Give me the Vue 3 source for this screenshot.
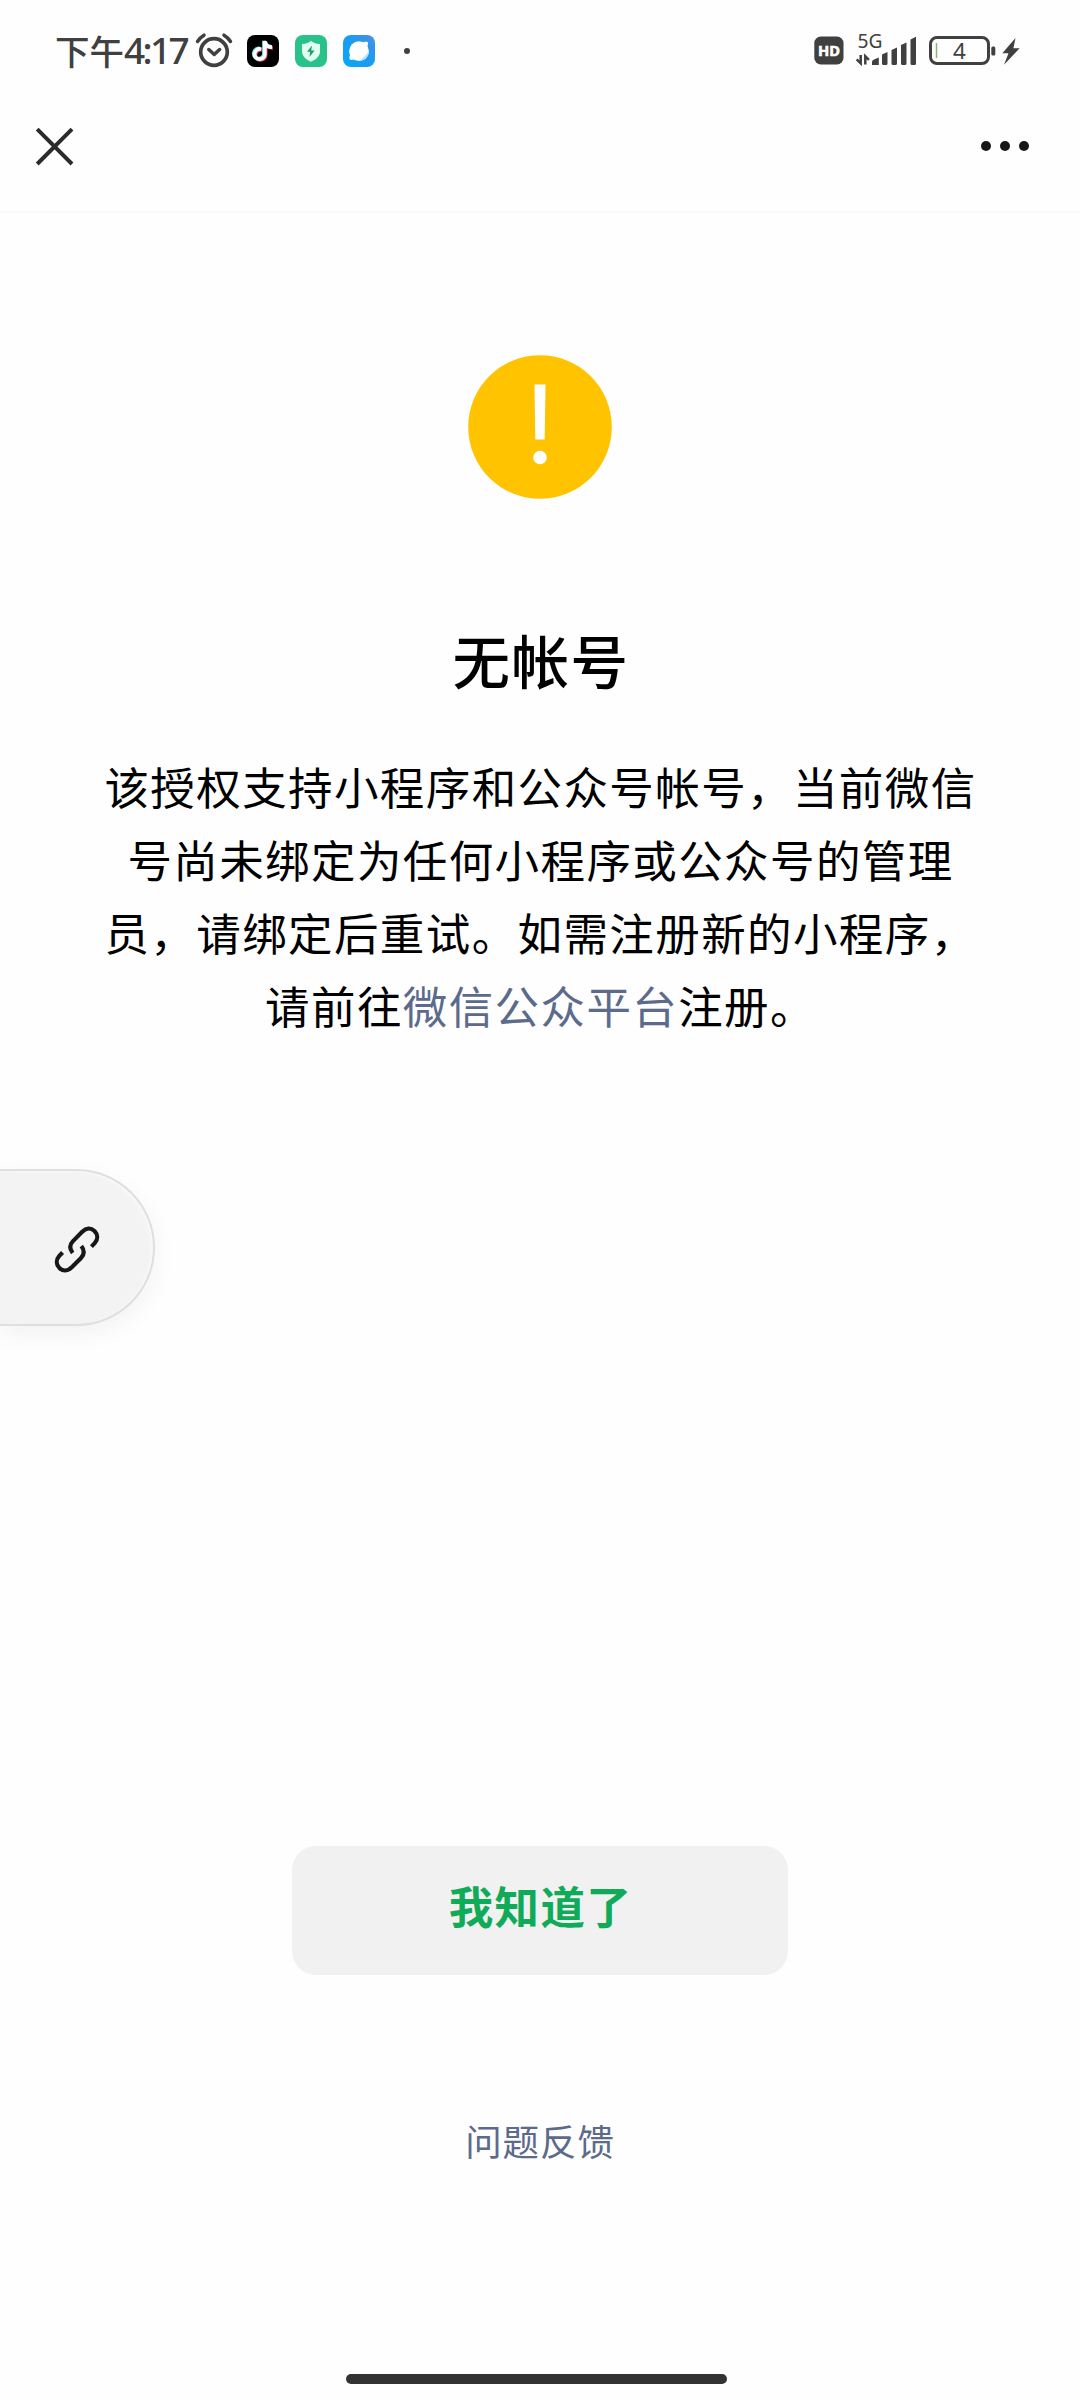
<script setup>
const lines = ['该授权支持小程序和公众号帐号，当前微信', '号尚未绑定为任何小程序或公众号的管理', '员，请绑定后重试。如需注册新的小程序，']
</script>

<template>
  <div class="screen">
    <header class="status">
      <div class="left">
        <span class="time"><span class="cjk">下午</span><span class="num">4:17</span></span>
        <svg class="alarm" width="40" height="40" viewBox="194 31 40 40" fill="none" stroke="#404040">
          <circle cx="214" cy="52" r="13.3" stroke-width="3.7" />
          <path d="M208.800 49.500l5.400 5 5.400-5" stroke-width="3.500" stroke-linecap="round" stroke-linejoin="round" />
          <path d="M197.500 41.500q2.500-4 6.500-6.300M230.500 41.500q-2.500-4-6.500-6.300" stroke-width="3.500" stroke-linecap="round" />
        </svg>
        <svg class="app" width="32" height="32" viewBox="0 0 32 32">
          <rect width="32" height="32" rx="8" fill="#000" />
          <g fill="none" stroke-width="3.700">
            <path d="M14.200 14.200a5.100 5.100 0 1 0 3.600 5V6.200c.4 3.600 3 5.800 7.200 6" stroke="#e8486b" transform="translate(.9 .8)" />
            <path d="M14.200 14.200a5.100 5.100 0 1 0 3.600 5V6.200c.4 3.600 3 5.800 7.200 6" stroke="#59dcd6" transform="translate(-.9 -.5)" />
            <path d="M14.200 14.200a5.100 5.100 0 1 0 3.600 5V6.200c.4 3.600 3 5.800 7.200 6" stroke="#fff" />
          </g>
        </svg>
        <svg class="app" width="32" height="32" viewBox="0 0 32 32">
          <rect width="32" height="32" rx="8" fill="#29c28a" />
          <path d="M16 6c2.700 2 5.400 2.800 9 3v7.200c0 4.700-3.600 8.100-9 10.600-5.400-2.500-9-5.900-9-10.600V9c3.600-.2 6.300-1 9-3z" fill="#e2fff4" />
          <path d="M17 10.500l-5 6.300h3.200l-.8 5.200 5.200-6.600h-3.400z" fill="#159d69" />
        </svg>
        <svg class="app" width="32" height="32" viewBox="0 0 32 32">
          <defs>
            <linearGradient id="sky" x1="0" y1="1" x2="1" y2="0">
              <stop offset="0" stop-color="#05a9fa" />
              <stop offset=".55" stop-color="#1c9bf0" />
              <stop offset="1" stop-color="#4a8fe2" />
            </linearGradient>
          </defs>
          <rect width="32" height="32" rx="8" fill="url(#sky)" />
          <circle cx="16" cy="16.200" r="9.900" fill="#fff" />
          <path d="M20 7.200c2.600-.7 4.500-.6 5 .4.400 1-.1 2.600-1 4.500zM7.300 19.500c-1 2-1.200 3.900-.6 4.800.7.900 2.300.8 4.600 0z" fill="#fff" />
          <path d="M25.900 15.500c.4 6-4.300 10.600-10.400 10.600 4.800-2.700 8-6 10.400-10.600z" fill="#b9dcf7" />
        </svg>
        <i class="more-dot"></i>
      </div>
      <div class="right">
        <svg width="32" height="40" viewBox="813 31 32 40">
          <rect x="814.300" y="36.500" width="29.200" height="28" rx="6.500" fill="#404040" />
          <text x="829" y="55.800" text-anchor="middle" font-size="14.500" font-weight="700" fill="#fff" stroke="#fff" stroke-width=".6" textLength="22" lengthAdjust="spacingAndGlyphs">HD</text>
        </svg>
        <svg class="signal" width="64" height="48" viewBox="854 27 64 48" fill="#404040">
          <text x="857.500" y="47.600" font-size="19.500" textLength="25" lengthAdjust="spacingAndGlyphs">5G</text>
          <path d="M860.700 55v8.300l-4-4M865.300 64.500v-8.300l3.600 3.600" fill="none" stroke="#404040" stroke-width="2.500" />
          <path d="M872 62q0-2 2-2.500l4.800-2V65H872zM882 54.500l5.500-2.500v11.500q0 1.500-1.500 1.500h-2.500q-1.500 0-1.500-1.500zM891.500 50l5.500-2.500v16q0 1.500-1.500 1.500H893q-1.500 0-1.500-1.500zM901 45l5.500-2.500v21q0 1.500-1.500 1.500h-2.500q-1.500 0-1.500-1.500zM910.500 39.500l5.500-2.800v26.800q0 1.500-1.500 1.500H912q-1.500 0-1.500-1.500z" />
        </svg>
        <svg class="battery" width="68" height="40" viewBox="928 31 68 40">
          <rect x="930.500" y="37.500" width="58" height="26" rx="6.500" fill="none" stroke="#404040" stroke-width="3" />
          <path d="M936.500 43v15" stroke="#86b870" stroke-width="1.500" />
          <rect x="991.300" y="46.500" width="4" height="9" rx="1.500" fill="#404040" />
          <text x="959.500" y="59.300" text-anchor="middle" font-size="22.500" fill="#404040">4</text>
        </svg>
        <svg class="bolt" width="20" height="40" viewBox="1001 31 20 40">
          <path d="M1015.500 38L1002.300 53.200h6.200l-4.500 11.600 15.700-16.600h-6.300z" fill="#404040" />
        </svg>
      </div>
    </header>

    <nav class="nav">
      <svg width="42" height="42" viewBox="0 0 42 42"><path d="M4.200 4.200l34.800 34.800M39 4.200L4.200 39" stroke="#2b2b2b" stroke-width="4" /></svg>
      <div class="menu"><i></i><i></i><i></i></div>
    </nav>

    <main class="content">
      <svg width="144" height="144" viewBox="0 0 144 144">
        <circle cx="72" cy="72" r="71.800" fill="#ffc300" />
        <path d="M66.500 29.500h11l-.8 55h-9.400z" fill="#fff" />
        <circle cx="72" cy="102.500" r="6.800" fill="#fff" />
      </svg>
      <h1>无帐号</h1>
      <p class="desc">
        <span v-for="line in lines" :key="line" class="line">{{ line }}</span>
        <span class="line">请前往<a>微信公众平台</a>注册。</span>
      </p>
      <button type="button">我知道了</button>
      <a class="feedback">问题反馈</a>
      <div class="home"></div>
    </main>

    <aside class="floating">
      <svg width="50" height="50" viewBox="0 0 46 46" fill="none" stroke="#171717" stroke-width="3.800">
        <path d="M19 26.700c-3-4-2.800-7.800.3-11l8.500-8.500c3.800-3.800 8-3.800 11.300-.8 3.300 3.300 3.300 7.700.2 11.200l-3 3.200" />
        <path d="M27 20.300c3 4 2.800 7.800-.3 11l-8.500 8.500c-3.800 3.800-8 3.800-11.300.8-3.300-3.300-3.300-7.700-.2-11.200l3-3.200" />
      </svg>
    </aside>
  </div>
</template>

<style>
body {
  margin: 0;
  background: #fefefe;
}
</style>

<style scoped>
.screen {
  position: relative;
  width: 1080px;
  height: 2400px;
  overflow: hidden;
  background: #fefefe;
  font-family: "Noto Sans CJK SC", sans-serif;
  color: #000;
}
svg {
  display: block;
  flex: none;
}
.status {
  height: 102px;
  display: flex;
  justify-content: space-between;
  box-sizing: border-box;
  padding: 0 59px 0 55px;
}
.status svg text {
  font-family: "Noto Sans", sans-serif;
}
.left,
.right {
  display: flex;
  align-items: center;
}
.time {
  display: flex;
  align-items: center;
  width: 139px;
  height: 60px;
  line-height: 60px;
  color: #404040;
  font-weight: 500;
  white-space: nowrap;
}
.cjk {
  font-size: 34.500px;
  width: 69px;
  margin-top: -3px;
}
.num {
  font-family: "Noto Sans", sans-serif;
  font-size: 37px;
  letter-spacing: -2.600px;
  margin-top: -2px;
}
.alarm {
  margin-right: 13px;
}
.app {
  margin-right: 16px;
}
.more-dot {
  width: 6px;
  height: 6px;
  border-radius: 50%;
  background: #404040;
  margin-left: 13px;
}
.signal {
  margin-left: 9px;
}
.battery {
  margin-left: 10px;
}
.bolt {
  margin-left: 5px;
}
.nav {
  height: 111px;
  box-sizing: border-box;
  border-bottom: 2px solid #f9f9f9;
  display: flex;
  justify-content: space-between;
  align-items: flex-start;
  padding: 23px 51px 0 33px;
}
.menu {
  display: flex;
  gap: 9px;
  padding-top: 16px;
}
.menu i {
  width: 10px;
  height: 10px;
  border-radius: 50%;
  background: #171717;
}
.content {
  height: 2187px;
  display: flex;
  flex-direction: column;
  align-items: center;
}
.content > svg {
  margin-top: 142px;
}
h1 {
  margin: 120px 0 0 2px;
  font-size: 57.500px;
  letter-spacing: 1.500px;
  line-height: 80px;
  font-weight: 500;
}
.desc {
  margin: 50px 0 0 1px;
  font-size: 44.500px;
  letter-spacing: 1.400px;
  line-height: 73px;
  text-align: center;
}
.line {
  display: block;
  white-space: nowrap;
}
.desc a,
.feedback {
  color: #5c6b8c;
}
button {
  margin: 805px 0 0;
  width: 496px;
  height: 129px;
  border: 0;
  border-radius: 24px;
  padding: 0 0 13px 1px;
  background: #f1f1f1;
  color: #10ab59;
  font-family: inherit;
  font-size: 44.500px;
  letter-spacing: 1.400px;
  font-weight: 700;
}
.feedback {
  margin-top: 136px;
  font-size: 36.500px;
  letter-spacing: .9px;
  line-height: 60px;
}
.home {
  width: 381px;
  height: 10px;
  margin: auto 7px 16px 0;
  border-radius: 5px;
  background: #333;
}
.floating {
  position: absolute;
  left: 0;
  top: 1169px;
  width: 155px;
  height: 157px;
  box-sizing: border-box;
  border: 2.500px solid #dfdfdf;
  border-left: 0;
  border-radius: 0 79px 79px 0;
  background: #f3f3f3;
  box-shadow: 0 8px 24px rgba(0, 0, 0, .05), inset -2px 1px 3px #f9f9f9;
  display: flex;
  align-items: center;
  padding: 3px 0 0 52px;
}
</style>
